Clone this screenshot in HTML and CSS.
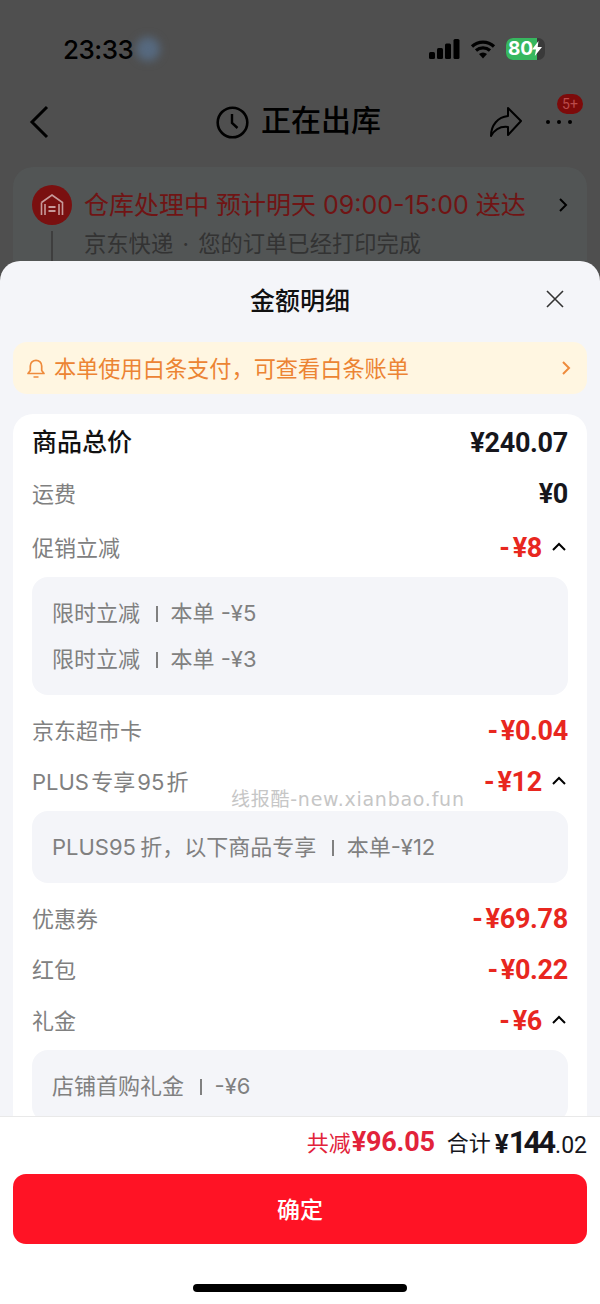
FILE: index.html
```html
<!DOCTYPE html>
<html lang="zh-CN">
<head>
<meta charset="utf-8">
<title>金额明细</title>
<link rel="stylesheet" href="styles.css">
</head>
<body>
<div class="screen">
  <section class="behind">
    <div class="status">
      <span class="time">23:33</span><span class="blur-dot"></span>
      <span class="status-icons">
        <svg class="signal" width="31" height="20" viewBox="0 0 31 20"><rect x="0" y="13" width="6" height="7" rx="1.5"/><rect x="8" y="9" width="6" height="11" rx="1.5"/><rect x="16" y="4.500" width="6" height="15.500" rx="1.500"/><rect x="24.500" y="0" width="6" height="20" rx="1.500"/></svg>
        <svg class="wifi" width="26" height="20" viewBox="0 0 26 20"><path d="M2 7.500a16 16 0 0 1 22 0M6 11.500a10.500 10.500 0 0 1 14 0" fill="none" stroke="#000" stroke-width="3.200"/><path d="M9 15a6 6 0 0 1 8 0l-4 4.500z"/></svg>
        <span class="battery"><span class="battery-fill">80</span><svg class="bolt" width="10" height="15" viewBox="0 0 10 15"><path d="M6.500 0 0 8.500h4L2.800 15 10 6H5.700z" fill="#fff"/></svg></span>
      </span>
    </div>
    <div class="nav">
      <svg class="back" width="20" height="34" viewBox="0 0 20 34"><path d="M18 2 3 17l15 15" fill="none" stroke="#000" stroke-width="3"/></svg>
      <div class="nav-title">
        <svg width="33" height="33" viewBox="0 0 33 33"><circle cx="16.500" cy="16.500" r="14.800" fill="none" stroke="#000" stroke-width="2.600"/><path d="M16 8v9l5.500 5" fill="none" stroke="#000" stroke-width="2.400"/></svg>
        <span class="nav-text">正在出库</span>
      </div>
      <div class="nav-actions">
        <svg width="34" height="32" viewBox="0 0 34 32"><path d="M19 2 32 15 19 29v-8C11 20 6 23 2 30c0-11 7-19 17-20z" fill="none" stroke="#000" stroke-width="2" stroke-linejoin="round"/></svg>
        <span class="more"><i></i><i></i><i></i><b class="badge">5+</b></span>
      </div>
    </div>
    <div class="order-card">
      <div class="order-head">
        <span class="house">
          <svg width="26" height="26" viewBox="0 0 26 26"><path d="M2.500 10.500 13 3l10.500 7.500V23M6 23V12M2.500 10.500V23M20 23V12" fill="none" stroke="#c79a9a" stroke-width="1.600"/><path d="M9.500 15h7M9.500 19h7" stroke="#c79a9a" stroke-width="1.800"/></svg>
        </span>
        <span class="order-title">仓库处理中 预计明天 09:00-15:00 送达</span>
        <svg width="10" height="16" viewBox="0 0 10 16"><path d="M2 2l6 6-6 6" fill="none" stroke="#000" stroke-width="2"/></svg>
      </div>
      <div class="order-sub">京东快递 · 您的订单已经打印完成</div>
    </div>
  </section>

  <section class="sheet">
    <header class="sheet-head">
      <span></span>
      <h1>金额明细</h1>
      <svg class="close" width="18" height="18" viewBox="0 0 18 18"><path d="M1 1l16 16M17 1 1 17" stroke="#333" stroke-width="1.600"/></svg>
    </header>
    <div class="notice">
      <svg width="20" height="22" viewBox="0 0 20 22"><path d="M2 16.500h16l-2.300-3V9a5.700 5.700 0 0 0-11.400 0v4.500zM7.500 20h5" fill="none" stroke="#ee8b3c" stroke-width="1.700" stroke-linejoin="round"/></svg>
      <span class="notice-text">本单使用白条支付，可查看白条账单</span>
      <svg width="10" height="16" viewBox="0 0 10 16"><path d="M2 2l6 6-6 6" fill="none" stroke="#ee8b3c" stroke-width="2"/></svg>
    </div>
    <div class="scroll">
      <div class="card">
        <div class="row row-total"><span class="label">商品总价</span><span class="amount">¥240.07</span></div>
        <div class="row row-ship"><span class="label">运费</span><span class="amount">¥0</span></div>
        <div class="row"><span class="label">促销立减</span><span class="amount red has-arrow">-<s class="gap"></s>¥8<svg class="up" width="14" height="9" viewBox="0 0 14 9"><path d="M1 8l6-6 6 6" fill="none" stroke="#000" stroke-width="2"/></svg></span></div>
        <div class="detail">
          <div class="detail-line">限时立减<i class="bar"></i>本单 -¥5</div>
          <div class="detail-line">限时立减<i class="bar"></i>本单 -¥3</div>
        </div>
        <div class="row"><span class="label">京东超市卡</span><span class="amount red">-<s class="gap"></s>¥0.04</span></div>
        <div class="row"><span class="label tight">PLUS 专享 95 折</span><span class="amount red has-arrow">-<s class="gap"></s>¥12<svg class="up" width="14" height="9" viewBox="0 0 14 9"><path d="M1 8l6-6 6 6" fill="none" stroke="#000" stroke-width="2"/></svg></span></div>
        <div class="detail">
          <div class="detail-line plus-line">PLUS95 折，以下商品专享<i class="bar"></i>本单-¥12</div>
        </div>
        <div class="row"><span class="label">优惠券</span><span class="amount red">-<s class="gap"></s>¥69.78</span></div>
        <div class="row"><span class="label">红包</span><span class="amount red">-<s class="gap"></s>¥0.22</span></div>
        <div class="row"><span class="label">礼金</span><span class="amount red has-arrow">-<s class="gap"></s>¥6<svg class="up" width="14" height="9" viewBox="0 0 14 9"><path d="M1 8l6-6 6 6" fill="none" stroke="#000" stroke-width="2"/></svg></span></div>
        <div class="detail">
          <div class="detail-line">店铺首购礼金<i class="bar"></i>-¥6</div>
        </div>
      </div>
    </div>
    <footer class="foot">
      <div class="summary">
        <span class="saved"><span class="label">共减</span><b>¥96.05</b></span>
        <span class="total"><span class="label">合计</span><b class="yen">¥</b><b class="big">144</b><b class="cents">.02</b></span>
      </div>
      <button class="confirm">确定</button>
      <div class="home"></div>
    </footer>
  </section>
  <div class="watermark">线报酷-new.xianbao.fun</div>
</div>
</body>
</html>
```

FILE: styles.css
```css
* { box-sizing: border-box; margin: 0; padding: 0; }
html, body { width: 600px; height: 1304px; overflow: hidden; }
body { font-family: "Inter", "Noto Sans CJK SC", "Noto Sans", sans-serif; background: #4f4f4f; color: #000; }
.screen { position: relative; width: 600px; height: 1304px; display: flex; flex-direction: column; overflow: hidden; }

.behind { height: 261px; flex: none; overflow: hidden; background: #4f4f4f; }
.status { height: 90px; display: flex; align-items: center; padding: 8px 55px 0 63px; }
.time { font: 500 26px/1 "Inter", sans-serif; letter-spacing: -0.5px; padding-top: 2px; }
.blur-dot { width: 24px; height: 24px; margin-left: 3px; border-radius: 50%; background: #56697f; filter: blur(4px); }
.status-icons { margin-left: auto; display: flex; align-items: center; gap: 10px; }
.battery { display: flex; align-items: center; width: 39px; height: 22px; border-radius: 7px; background: #3a3a3a; position: relative; overflow: hidden; }
.battery-fill { width: 31px; height: 22px; background: #37b75f; color: #fff; font: 700 19px/22px "Inter", sans-serif; padding-left: 2px; }
.bolt { position: absolute; left: 26px; top: 3px; }

.nav { height: 64px; display: grid; grid-template-columns: 1fr auto 1fr; align-items: center; padding: 0 28px 0 29px; }
.nav-title { display: flex; align-items: center; gap: 12px; font-size: 30px; font-weight: 500; line-height: 40px; margin-left: -4px; }
.nav-text { padding-bottom: 4px; }
.nav-actions { justify-self: end; display: flex; align-items: center; gap: 23px; }
.more { position: relative; display: flex; gap: 7px; width: 26px; }
.more i { width: 4px; height: 4px; border-radius: 50%; background: #000; }
.badge { position: absolute; left: 11px; top: -26px; width: 26px; height: 20px; border-radius: 10px; background: #7d0a0a; color: #bb4a4a; font: 400 14px/20px "Roboto", sans-serif; text-align: center; }

.order-card { margin: 13px 13px 0; height: 110px; padding: 18px 19px 0; border-radius: 20px 20px 0 0; background: #525555; }
.order-head { display: flex; align-items: center; height: 40px; }
.house { flex: none; width: 40px; height: 40px; margin-right: 12px; border-radius: 50%; background: #7a1010; display: flex; align-items: center; justify-content: center; }
.order-title { flex: 1; font-size: 25px; line-height: 36px; color: #701414; white-space: nowrap; }
.order-sub { position: relative; padding-left: 52px; font-size: 22.300px; line-height: 30px; color: #333; margin-top: 4px; word-spacing: 3px; }
.order-sub::before { content: ""; position: absolute; left: 19px; top: 2px; height: 40px; width: 1.500px; background: #3e3e3e; }

.sheet { flex: 1; min-height: 0; display: flex; flex-direction: column; background: #f4f5f9; border-radius: 20px 20px 0 0; }
.sheet-head { flex: none; height: 81px; display: grid; grid-template-columns: 1fr auto 1fr; align-items: center; padding: 0 36px; }
.sheet-head h1 { font-size: 25px; font-weight: 500; line-height: 36px; color: #111; padding-bottom: 2px; }
.close { justify-self: end; margin-top: -6px; }
.notice { flex: none; height: 52px; margin: 0 13px; padding: 0 16px 0 13px; display: flex; align-items: center; gap: 8px; border-radius: 14px; background: #fff6e1; color: #ec8433; font-size: 22.200px; }
.notice-text { flex: 1; line-height: 30px; padding-top: 1px; }
.scroll { flex: 1; min-height: 0; overflow: hidden; padding-top: 20px; }
.card { margin: 0 13px; padding: 3px 19px 20px; background: #fff; border-radius: 20px 20px 0 0; }
.row { display: flex; justify-content: space-between; align-items: center; height: 50px; margin-top: 1px; font-size: 22px; color: #808080; }
.label { padding-bottom: 4px; white-space: nowrap; }
.tight { word-spacing: -4px; }
.row-total { height: 52px; margin-top: 0; font-size: 25px; font-weight: 500; color: #111; }
.row-total .label { padding-bottom: 6px; }
.row-ship { margin: 0 0 4px; }
.amount { font: 700 27px/1 "Roboto", "Noto Sans", sans-serif; color: #16161c; white-space: nowrap; letter-spacing: -0.3px; display: flex; align-items: center; padding-top: 1px; }
.red { color: #e8271f; }
.gap { width: 3px; }
.has-arrow { margin-right: 2px; }
.up { margin-left: 10px; margin-top: -5px; }
.detail { margin: 4px 0 11px; padding: 13px 20px; border-radius: 16px; background: #f4f5f9; }
.detail-line { height: 46px; line-height: 46px; font-size: 22px; color: #808080; white-space: nowrap; }
.plus-line { word-spacing: -2px; }
.bar { display: inline-block; width: 1.500px; height: 16px; margin: 0 13px 0 16px; background: #808080; vertical-align: -1px; }

.foot { flex: none; height: 188px; padding: 0 13px; background: #fff; border-top: 1px solid #e9e9e9; position: relative; }
.summary { height: 51px; margin-bottom: 6px; display: flex; justify-content: flex-end; align-items: center; gap: 12px; font-size: 22px; white-space: nowrap; }
.saved { color: #e2233a; display: flex; align-items: center; gap: 1px; }
.saved b { font: 700 27px/1 "Roboto", sans-serif; letter-spacing: -0.2px; }
.total { color: #16161c; display: flex; align-items: baseline; }
.total .label { padding-bottom: 0; transform: translateY(-2px); }
.yen { font: 700 26px/1 "Roboto", sans-serif; margin-left: 4px; }
.big { font: 700 31px/1 "Roboto", sans-serif; letter-spacing: -3px; }
.cents { font: 400 23px/1 "Roboto", sans-serif; margin-left: 2px; }
.confirm { display: block; width: 100%; height: 70px; padding-bottom: 2px; border: 0; border-radius: 13px; background: #ff1325; color: #fff; font: 500 23px/1 "Noto Sans CJK SC", sans-serif; }
.home { width: 214px; height: 8px; margin: 40px auto 0; border-radius: 4px; background: #000; }

.watermark { position: absolute; left: 231px; top: 785px; font: 400 19px/28px "DejaVu Sans", "Noto Sans CJK SC", sans-serif; color: #c6c6c6; white-space: nowrap; letter-spacing: 0.750px; }
```
